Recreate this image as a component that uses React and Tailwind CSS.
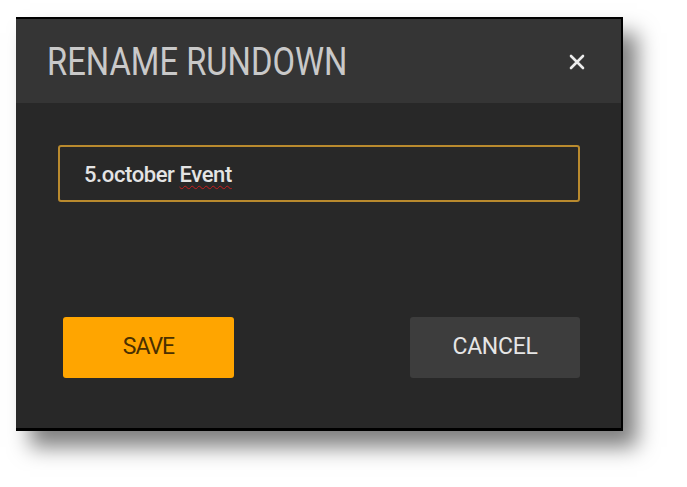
import React from "react";

export default function App() {
  return (
    <div className="w-[687px] h-[487px] bg-white pl-4 pt-[17px]" style={{ fontFamily: "Roboto, 'Liberation Sans', sans-serif" }}>
      <div className="w-[607px] h-[414px] bg-[#282828] border-t-2 border-r-2 border-b-[3px] border-black shadow-[14px_16px_20px_rgba(0,0,0,0.5)] flex flex-col">
        <div className="h-[84px] bg-[#353535] flex items-center justify-between pl-[31px] pr-[36px]">
          <h1 className="text-[39px] text-[#c9c9c9] leading-none pt-[2px] whitespace-nowrap origin-left scale-x-[0.84]">RENAME RUNDOWN</h1>
          <svg width="16" height="16" viewBox="0 0 16 16" className="mt-[2px]">
            <path d="M2 2L14 14M14 2L2 14" stroke="#ececec" strokeWidth="2.6" strokeLinecap="round" />
          </svg>
        </div>
        <div className="flex-1 flex flex-col pl-[42px] pr-[41px] pt-[42px]">
          <div className="h-[57px] rounded-[3px] border-2 border-[#b98a2e] flex items-center pl-[24px]">
            <span className="text-[22px] text-[#e4e4e4] tracking-[-0.4px] font-medium pt-[1px]">
              5.october <span className="underline decoration-wavy decoration-[#c81e1e] decoration-1 underline-offset-[3px]">Event</span>
            </span>
          </div>
          <div className="flex justify-between mt-[115px] pl-[5px]">
            <button className="w-[171px] h-[61px] rounded-[3px] bg-[#ffa500] text-[#4a3000] text-[23px] tracking-[-1px]">SAVE</button>
            <button className="w-[170px] h-[61px] rounded-[3px] bg-[#3d3d3d] text-[#e6e6e6] text-[23px] tracking-[-0.3px]">CANCEL</button>
          </div>
        </div>
      </div>
    </div>
  );
}
